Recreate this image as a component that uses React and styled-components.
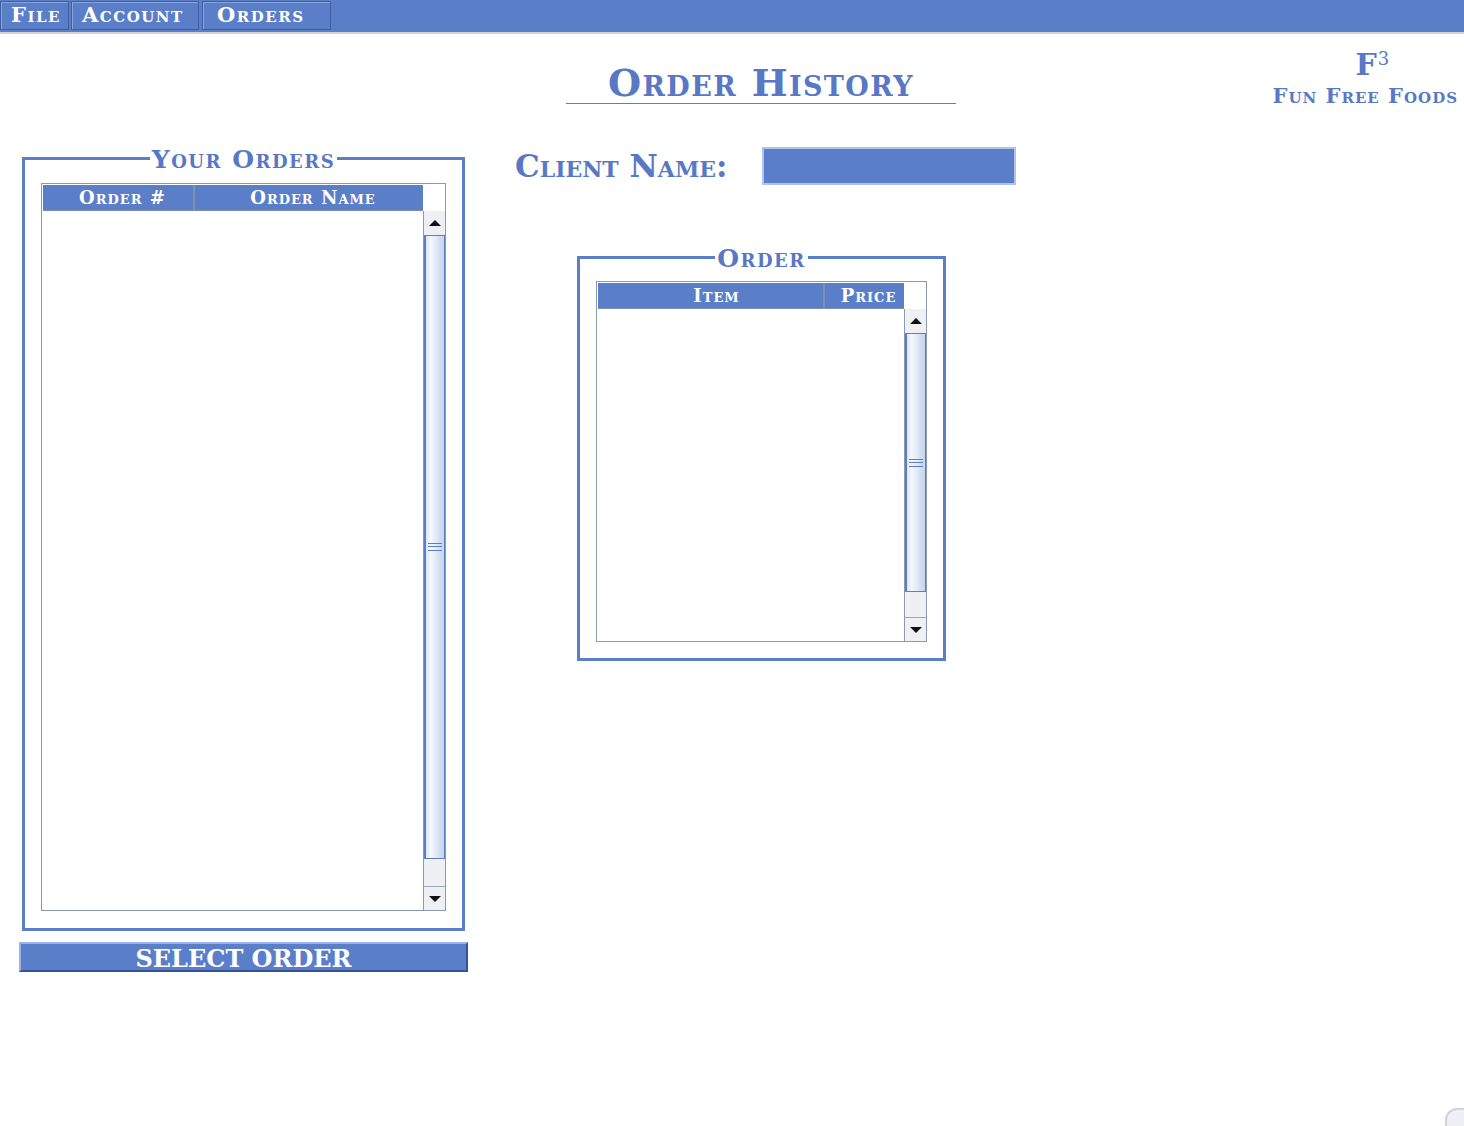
import React from "react";
import styled, { createGlobalStyle } from "styled-components";

const BLUE = "#5a7ec8";
const TEXT_BLUE = "#5878c6";
const FONT = `"DejaVu Serif", "Liberation Serif", serif`;

const Global = createGlobalStyle`
  html, body { margin: 0; padding: 0; background: #fff; }
  body { font-family: ${FONT}; width: 1464px; height: 1126px; overflow: hidden; position: relative; }
`;

const MenuBar = styled.div`
  display: flex;
  height: 31px;
  background: ${BLUE};
  border-bottom: 2px solid #d4d4d8;
  padding-top: 1px;
  box-sizing: content-box;
`;

const MenuItem = styled.div`
  width: ${(p) => p.w}px;
  margin-right: ${(p) => p.gap || 0}px;
  box-sizing: border-box;
  height: 29px;
  border: 1px solid #3f5f9f;
  box-shadow: inset 1px 1px 0 #86a3dd;
  color: #fff;
  font-family: ${FONT};
  font-weight: bold;
  font-variant: small-caps;
  font-size: 21px;
  letter-spacing: 1.5px;
  display: flex;
  align-items: center;
  justify-content: flex-start;
  padding-left: ${(p) => p.pl}px;
  line-height: 1;
  padding-bottom: 2px;
`;

const Header = styled.div`
  display: flex;
  align-items: flex-start;
  height: 112px;
`;

const TitleBlock = styled.div`
  margin-left: 566px;
  margin-top: 30px;
  width: 390px;
  border-bottom: 1px solid ${BLUE};
  text-align: center;
  height: 39px;
`;

const Title = styled.h1`
  margin: 0;
  font-family: ${FONT};
  font-weight: bold;
  font-variant: small-caps;
  font-size: 38px;
  line-height: 38px;
  letter-spacing: 1.4px;
  color: ${TEXT_BLUE};
`;

const Logo = styled.div`
  margin-left: auto;
  margin-right: 6px;
  margin-top: 8px;
  text-align: center;
  color: ${TEXT_BLUE};
  font-family: ${FONT};
  font-weight: bold;
  font-variant: small-caps;
`;

const LogoMark = styled.div`
  font-size: 30px;
  line-height: 34px;
  padding-left: 14px;
  sup { font-size: 18px; vertical-align: 10px; font-weight: normal; margin-left: 1px; }
`;

const LogoName = styled.div`
  font-size: 21px;
  line-height: 24px;
  letter-spacing: 1px;
  margin-top: 2px;
`;

const Content = styled.div`
  display: flex;
  align-items: flex-start;
`;

const LeftColumn = styled.div`
  margin-left: 19px;
  width: 449px;
  display: flex;
  flex-direction: column;
  align-items: flex-start;
`;

const Group = styled.fieldset`
  margin: ${(p) => p.mt || 0}px 0 0 ${(p) => p.ml || 0}px;
  width: ${(p) => p.w}px;
  box-sizing: border-box;
  border: 3px solid ${BLUE};
  padding: 0 ${(p) => p.pr}px ${(p) => p.pb}px ${(p) => p.pl}px;
`;

const Legend = styled.legend`
  margin: 0 auto;
  padding: 0 2px;
  color: ${TEXT_BLUE};
  font-family: ${FONT};
  font-weight: bold;
  font-variant: small-caps;
  font-size: 25px;
  line-height: 24px;
  letter-spacing: 1.5px;
  position: relative;
  top: 2px;
`;

const Table = styled.div`
  border: 1px solid #8c9ab0;
  padding: 1px 0 0 1px;
  display: grid;
  grid-template-columns: 1fr 22px;
  grid-template-rows: 26px ${(p) => p.bodyH}px;
  margin-top: ${(p) => p.mt}px;
`;

const HeadRow = styled.div`
  display: flex;
  background: ${BLUE};
  border-bottom: 1px solid #7e8ea8;
`;

const HeadCell = styled.div`
  width: ${(p) => (p.w ? `${p.w}px` : "auto")};
  flex: ${(p) => (p.w ? "none" : 1)};
  box-sizing: border-box;
  border-right: ${(p) => (p.last ? "none" : "2px solid #8290a8")};
  color: #fff;
  font-family: ${FONT};
  font-weight: bold;
  font-variant: small-caps;
  font-size: 18px;
  letter-spacing: 1px;
  display: flex;
  align-items: center;
  justify-content: center;
  padding-left: ${(p) => p.pl || 0}px;
`;

const Corner = styled.div`
  background: #fff;
`;

const ListBody = styled.div`
  background: #fff;
`;

const ScrollBar = styled.div`
  display: flex;
  flex-direction: column;
  border-left: 1px solid #8c9ab0;
  background: #eef0f4;
`;

const ScrollButton = styled.div`
  height: ${(p) => p.h}px;
  background: #eef0f4;
  border-top: ${(p) => (p.down ? "1px solid #9aa6b8" : "none")};
  display: flex;
  align-items: center;
  justify-content: center;
  &::after {
    content: "";
    width: 0;
    height: 0;
    border-left: 6px solid transparent;
    border-right: 6px solid transparent;
    ${(p) => (p.down ? "border-top: 6px solid #111;" : "border-bottom: 6px solid #111;")}
  }
`;

const Thumb = styled.div`
  flex: 1;
  border: 1px solid ${BLUE};
  border-left-width: 2px;
  background: linear-gradient(to right, #dde6f6 0%, #f4f7fc 25%, #e8eef8 50%, #cfdcef 80%, #c6d5ec 100%);
  display: flex;
  align-items: center;
  justify-content: center;
`;

const Grip = styled.div`
  width: 14px;
  height: 6px;
  border-top: 1px solid ${BLUE};
  border-bottom: 1px solid ${BLUE};
  position: relative;
  &::after {
    content: "";
    position: absolute;
    left: 0;
    right: 0;
    top: 2px;
    border-top: 1px solid ${BLUE};
  }
`;

const TrackRest = styled.div`
  height: ${(p) => p.h}px;
  background: #eef0f4;
`;

const SelectButton = styled.button`
  margin-top: 11px;
  width: 449px;
  height: 30px;
  background: ${BLUE};
  border: 2px solid;
  border-color: #9ab4e6 #34549a #34549a #9ab4e6;
  color: #fff;
  font-family: ${FONT};
  font-weight: bold;
  font-size: 24px;
  line-height: 1;
  padding: 3px 0 0;
  cursor: pointer;
`;

const RightArea = styled.div`
  margin-left: 47px;
  display: flex;
  flex-direction: column;
  align-items: flex-start;
`;

const ClientRow = styled.div`
  display: flex;
  align-items: center;
  margin-top: 1px;
`;

const ClientLabel = styled.label`
  color: ${TEXT_BLUE};
  font-family: ${FONT};
  font-weight: bold;
  font-variant: small-caps;
  font-size: 31px;
  margin-right: 35px;
`;

const ClientInput = styled.input`
  width: 254px;
  height: 38px;
  box-sizing: border-box;
  background: ${BLUE};
  border: 2px solid #aec4ea;
  outline: none;
  color: #fff;
`;

const TopCorner = styled.div`
  position: absolute;
  left: 1445px;
  top: 1108px;
  width: 40px;
  height: 40px;
  border: 2px solid #d6d0da;
  border-radius: 12px;
  background: #eef0f6;
`;

function Scroller({ up, rest, down }) {
  return (
    <ScrollBar>
      <ScrollButton h={up} />
      <Thumb>
        <Grip />
      </Thumb>
      <TrackRest h={rest} />
      <ScrollButton h={down} down />
    </ScrollBar>
  );
}

export default function App() {
  return (
    <>
      <Global />
      <MenuBar>
        <MenuItem w={69} gap={2} pl={10}>File</MenuItem>
        <MenuItem w={128} gap={3} pl={10}>Account</MenuItem>
        <MenuItem w={129} pl={14}>Orders</MenuItem>
      </MenuBar>
      <Header>
        <TitleBlock>
          <Title>Order History</Title>
        </TitleBlock>
        <Logo>
          <LogoMark>
            F<sup>3</sup>
          </LogoMark>
          <LogoName>Fun Free Foods</LogoName>
        </Logo>
      </Header>
      <Content>
        <LeftColumn>
          <Group ml={3} w={443} pl={16} pr={16} pb={17}>
            <Legend>Your Orders</Legend>
            <Table mt={13} bodyH={699}>
              <HeadRow>
                <HeadCell w={152} pl={9}>Order #</HeadCell>
                <HeadCell last pl={8}>Order Name</HeadCell>
              </HeadRow>
              <Corner />
              <ListBody />
              <Scroller up={24} rest={27} down={23} />
            </Table>
          </Group>
          <SelectButton>SELECT ORDER</SelectButton>
        </LeftColumn>
        <RightArea>
          <ClientRow>
            <ClientLabel htmlFor="client">Client Name:</ClientLabel>
            <ClientInput id="client" />
          </ClientRow>
          <Group ml={62} mt={60} w={369} pl={16} pr={16} pb={16}>
            <Legend>Order</Legend>
            <Table mt={12} bodyH={332}>
              <HeadRow>
                <HeadCell w={227} pl={12}>Item</HeadCell>
                <HeadCell last pl={8}>Price</HeadCell>
              </HeadRow>
              <Corner />
              <ListBody />
              <Scroller up={24} rest={25} down={23} />
            </Table>
          </Group>
        </RightArea>
      </Content>
      <TopCorner />
    </>
  );
}
